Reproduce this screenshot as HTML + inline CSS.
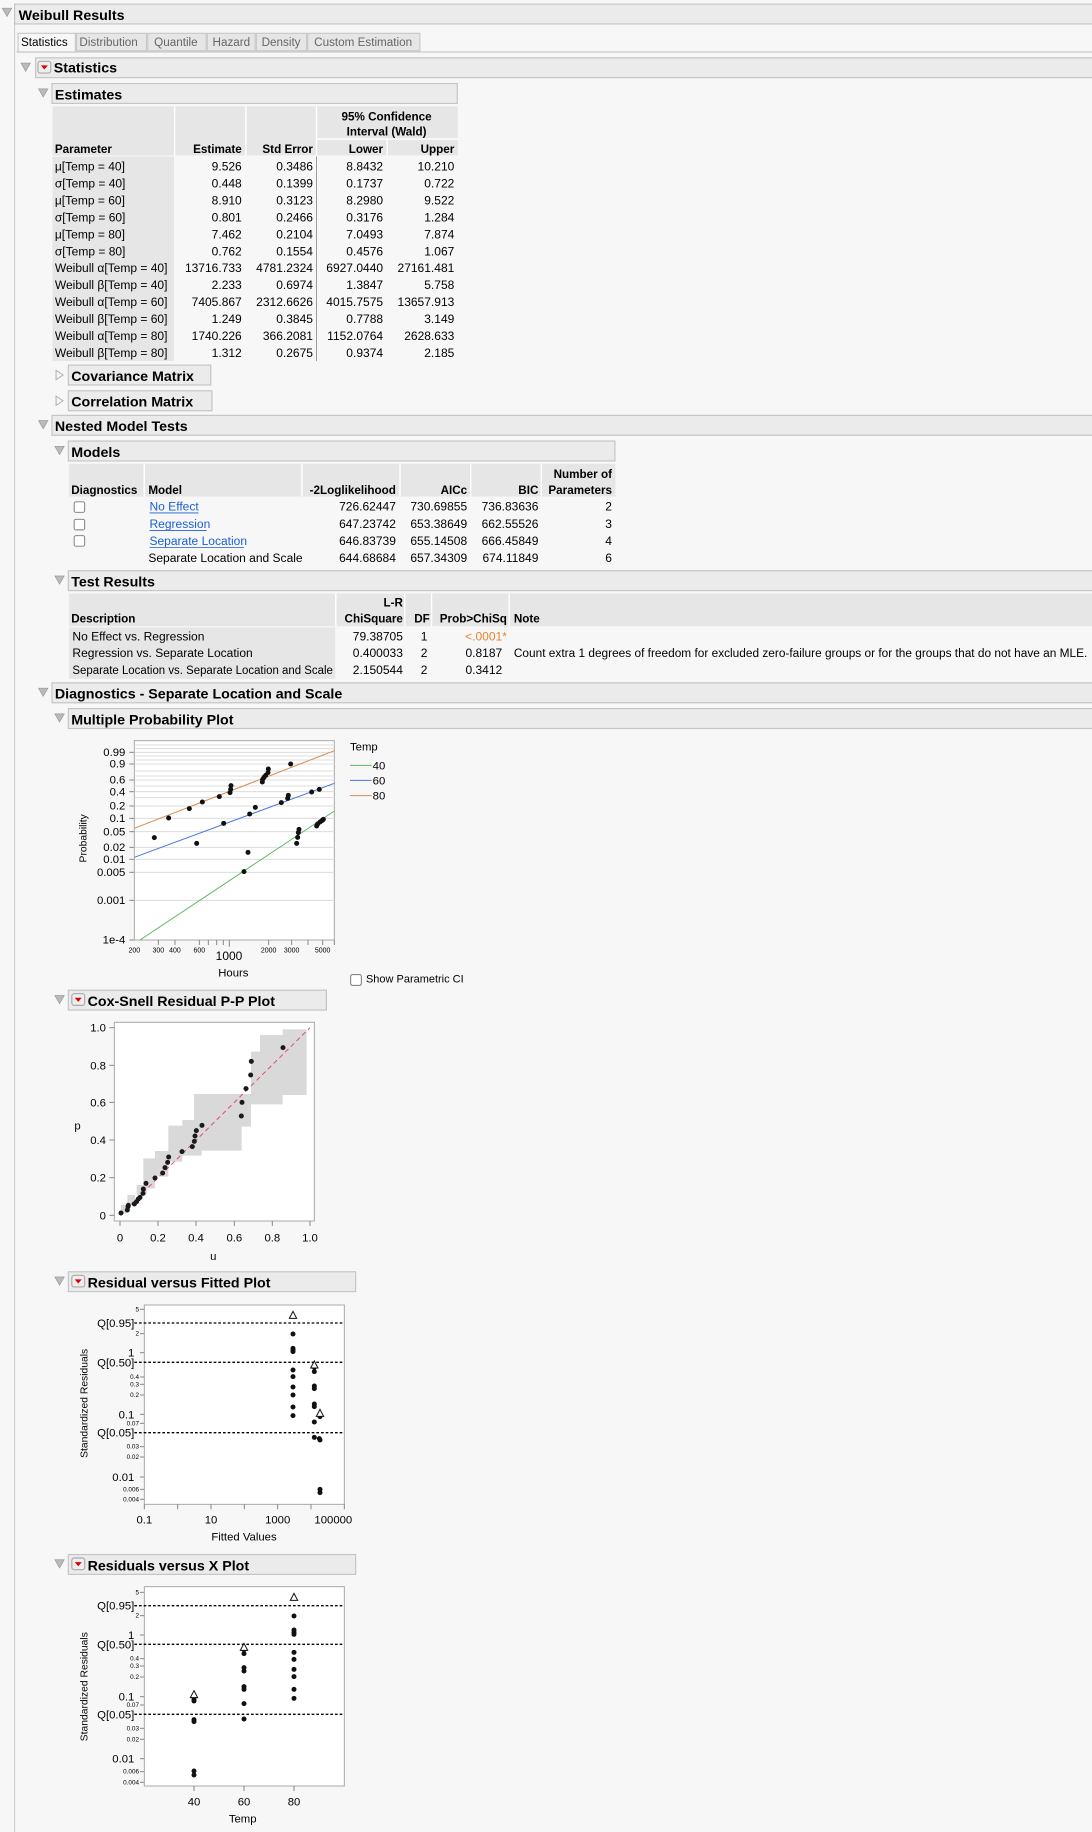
<!DOCTYPE html>
<html><head><meta charset="utf-8"><style>html,body{margin:0;padding:0;background:#f7f7f7}svg{display:block}text{font-family:"Liberation Sans",sans-serif}</style></head><body>
<svg width="1092" height="1832" viewBox="0 0 1092 1832" xmlns="http://www.w3.org/2000/svg">
<rect width="1092" height="1832" fill="#f7f7f7"/>
<g transform="scale(1.16791,1.16837)" font-size="10.5" fill="#000">
<line x1="12.5" y1="21" x2="12.5" y2="1568" stroke="#d0d0d0"/>
<rect x="12.5" y="3.5" width="930" height="17" fill="#ebebeb" stroke="#c4c4c4"/>
<path d="M2 7 L10 7 L6 14 Z" fill="#bbb" stroke="#999" stroke-width=".6"/>
<text x="16" y="17" font-weight="bold" font-size="12.2">Weibull Results</text>
<line x1="14" y1="44.5" x2="935" y2="44.5" stroke="#c8c8c8"/>
<rect x="15.5" y="28.5" width="49" height="16" fill="#f7f7f7" stroke="#c8c8c8"/>
<rect x="65.5" y="28.5" width="60" height="15" fill="#e6e6e6" stroke="#c8c8c8"/>
<rect x="126.5" y="28.5" width="50" height="15" fill="#e6e6e6" stroke="#c8c8c8"/>
<rect x="177.5" y="28.5" width="41" height="15" fill="#e6e6e6" stroke="#c8c8c8"/>
<rect x="219.5" y="28.5" width="43" height="15" fill="#e6e6e6" stroke="#c8c8c8"/>
<rect x="263.5" y="28.5" width="96" height="15" fill="#e6e6e6" stroke="#c8c8c8"/>
<g font-size="10" fill="#666"><text x="18" y="39.5" fill="#000">Statistics</text><text x="68" y="39.5">Distribution</text><text x="132" y="39.5">Quantile</text><text x="182" y="39.5">Hazard</text><text x="224" y="39.5">Density</text><text x="269" y="39.5">Custom Estimation</text></g>
<rect x="30.5" y="49.5" width="910" height="17" fill="#ebebeb" stroke="#c4c4c4"/>
<path d="M18 54 L26 54 L22 61 Z" fill="#bbb" stroke="#999" stroke-width=".6"/>
<rect x="32.5" y="52.5" width="11" height="10" rx="2" fill="#eee" stroke="#aaa"/><path d="M35 56 L41 56 L38 59.5 Z" fill="#d00"/>
<text x="46" y="62" font-weight="bold" font-size="12.2">Statistics</text>
<rect x="44.5" y="71.5" width="347" height="17" fill="#ebebeb" stroke="#c4c4c4"/>
<path d="M33 76 L41 76 L37 83 Z" fill="#bbb" stroke="#999" stroke-width=".6"/>
<text x="47" y="85" font-weight="bold" font-size="12.2">Estimates</text>
<rect x="45" y="91" width="347" height="42" fill="#e6e6e6"/>
<rect x="45" y="134" width="104" height="175" fill="#e6e6e6"/>
<g stroke="#fff" stroke-width="1.2"><line x1="149.5" y1="91" x2="149.5" y2="133"/><line x1="210.5" y1="91" x2="210.5" y2="133"/><line x1="271" y1="91" x2="271" y2="133"/><line x1="331.5" y1="119" x2="331.5" y2="133"/><line x1="271" y1="119" x2="392" y2="119"/></g>
<line x1="271" y1="134" x2="271" y2="309" stroke="#888" stroke-width=".7"/>
<g font-weight="bold" font-size="10"><text x="331" y="103" text-anchor="middle">95% Confidence</text><text x="331" y="116" text-anchor="middle">Interval (Wald)</text><text x="47" y="131">Parameter</text><text x="207" y="131" text-anchor="end">Estimate</text><text x="268" y="131" text-anchor="end">Std Error</text><text x="328" y="131" text-anchor="end">Lower</text><text x="389" y="131" text-anchor="end">Upper</text></g>
<g font-size="10.3">
<text x="47" y="146">μ[Temp = 40]</text><text x="47" y="160.5">σ[Temp = 40]</text><text x="47" y="175">μ[Temp = 60]</text><text x="47" y="189.5">σ[Temp = 60]</text><text x="47" y="204">μ[Temp = 80]</text><text x="47" y="218.5">σ[Temp = 80]</text><text x="47" y="233">Weibull α[Temp = 40]</text><text x="47" y="247.5">Weibull β[Temp = 40]</text><text x="47" y="262">Weibull α[Temp = 60]</text><text x="47" y="276.5">Weibull β[Temp = 60]</text><text x="47" y="291">Weibull α[Temp = 80]</text><text x="47" y="305.5">Weibull β[Temp = 80]</text>
<g text-anchor="end">
<text x="207" y="146">9.526</text><text x="207" y="160.5">0.448</text><text x="207" y="175">8.910</text><text x="207" y="189.5">0.801</text><text x="207" y="204">7.462</text><text x="207" y="218.5">0.762</text><text x="207" y="233">13716.733</text><text x="207" y="247.5">2.233</text><text x="207" y="262">7405.867</text><text x="207" y="276.5">1.249</text><text x="207" y="291">1740.226</text><text x="207" y="305.5">1.312</text>
<text x="268" y="146">0.3486</text><text x="268" y="160.5">0.1399</text><text x="268" y="175">0.3123</text><text x="268" y="189.5">0.2466</text><text x="268" y="204">0.2104</text><text x="268" y="218.5">0.1554</text><text x="268" y="233">4781.2324</text><text x="268" y="247.5">0.6974</text><text x="268" y="262">2312.6626</text><text x="268" y="276.5">0.3845</text><text x="268" y="291">366.2081</text><text x="268" y="305.5">0.2675</text>
<text x="328" y="146">8.8432</text><text x="328" y="160.5">0.1737</text><text x="328" y="175">8.2980</text><text x="328" y="189.5">0.3176</text><text x="328" y="204">7.0493</text><text x="328" y="218.5">0.4576</text><text x="328" y="233">6927.0440</text><text x="328" y="247.5">1.3847</text><text x="328" y="262">4015.7575</text><text x="328" y="276.5">0.7788</text><text x="328" y="291">1152.0764</text><text x="328" y="305.5">0.9374</text>
<text x="389" y="146">10.210</text><text x="389" y="160.5">0.722</text><text x="389" y="175">9.522</text><text x="389" y="189.5">1.284</text><text x="389" y="204">7.874</text><text x="389" y="218.5">1.067</text><text x="389" y="233">27161.481</text><text x="389" y="247.5">5.758</text><text x="389" y="262">13657.913</text><text x="389" y="276.5">3.149</text><text x="389" y="291">2628.633</text><text x="389" y="305.5">2.185</text>
</g></g>
<rect x="58.5" y="312.5" width="122" height="17" fill="#ebebeb" stroke="#c4c4c4"/>
<path d="M48 317 L48 325 L54 321 Z" fill="none" stroke="#aaa" stroke-width=".8"/>
<text x="61" y="326" font-weight="bold" font-size="12.2">Covariance Matrix</text>
<rect x="58.5" y="334.5" width="123" height="17" fill="#ebebeb" stroke="#c4c4c4"/>
<path d="M48 339 L48 347 L54 343 Z" fill="none" stroke="#aaa" stroke-width=".8"/>
<text x="61" y="348" font-weight="bold" font-size="12.2">Correlation Matrix</text>
<rect x="44.5" y="355.5" width="900" height="17" fill="#ebebeb" stroke="#c4c4c4"/>
<path d="M33 360 L41 360 L37 367 Z" fill="#bbb" stroke="#999" stroke-width=".6"/>
<text x="47" y="369" font-weight="bold" font-size="12.2">Nested Model Tests</text>
<rect x="58.5" y="377.5" width="468" height="17" fill="#ebebeb" stroke="#c4c4c4"/>
<path d="M47 382 L55 382 L51 389 Z" fill="#bbb" stroke="#999" stroke-width=".6"/>
<text x="61" y="391" font-weight="bold" font-size="12.2">Models</text>
<rect x="59" y="397" width="468" height="28" fill="#e6e6e6"/>
<g stroke="#fff" stroke-width="1.2"><line x1="123.5" y1="397" x2="123.5" y2="425"/><line x1="258.5" y1="397" x2="258.5" y2="425"/><line x1="342.5" y1="397" x2="342.5" y2="425"/><line x1="403" y1="397" x2="403" y2="425"/><line x1="463.5" y1="397" x2="463.5" y2="425"/></g>
<g font-weight="bold" font-size="10"><text x="61" y="423">Diagnostics</text><text x="127" y="423">Model</text><text x="339" y="423" text-anchor="end">-2Loglikelihood</text><text x="400" y="423" text-anchor="end">AICc</text><text x="461" y="423" text-anchor="end">BIC</text><text x="524" y="409" text-anchor="end">Number of</text><text x="524" y="423" text-anchor="end">Parameters</text></g>
<g fill="#fff" stroke="#777" stroke-width=".8"><rect x="63.5" y="429.5" width="9" height="9" rx="1.5"/><rect x="63.5" y="444.5" width="9" height="9" rx="1.5"/><rect x="63.5" y="458.5" width="9" height="9" rx="1.5"/></g>
<g font-size="10.3"><g fill="#1a5fd6"><text x="128" y="437">No Effect</text><text x="128" y="452">Regression</text><text x="128" y="466.5">Separate Location</text></g>
<line x1="128" y1="439" x2="170" y2="439" stroke="#1a5fd6" stroke-width=".7"/><line x1="128" y1="454" x2="177" y2="454" stroke="#1a5fd6" stroke-width=".7"/><line x1="128" y1="468.5" x2="209" y2="468.5" stroke="#1a5fd6" stroke-width=".7"/>
<text x="127" y="481">Separate Location and Scale</text>
<g text-anchor="end"><text x="339" y="437">726.62447</text><text x="339" y="452">647.23742</text><text x="339" y="466.5">646.83739</text><text x="339" y="481">644.68684</text>
<text x="400" y="437">730.69855</text><text x="400" y="452">653.38649</text><text x="400" y="466.5">655.14508</text><text x="400" y="481">657.34309</text>
<text x="461" y="437">736.83636</text><text x="461" y="452">662.55526</text><text x="461" y="466.5">666.45849</text><text x="461" y="481">674.11849</text>
<text x="524" y="437">2</text><text x="524" y="452">3</text><text x="524" y="466.5">4</text><text x="524" y="481">6</text></g></g>
<rect x="58.5" y="488.5" width="890" height="17" fill="#ebebeb" stroke="#c4c4c4"/>
<path d="M47 493 L55 493 L51 500 Z" fill="#bbb" stroke="#999" stroke-width=".6"/>
<text x="61" y="502" font-weight="bold" font-size="12.2">Test Results</text>
<rect x="59" y="508" width="876" height="28" fill="#e6e6e6"/>
<rect x="59" y="537" width="228" height="44" fill="#e6e6e6"/>
<g stroke="#fff" stroke-width="1.2"><line x1="287.5" y1="508" x2="287.5" y2="536"/><line x1="346.5" y1="508" x2="346.5" y2="536"/><line x1="369.5" y1="508" x2="369.5" y2="536"/><line x1="436" y1="508" x2="436" y2="536"/></g>
<g font-weight="bold" font-size="10"><text x="61" y="533">Description</text><text x="345" y="519" text-anchor="end">L-R</text><text x="345" y="533" text-anchor="end">ChiSquare</text><text x="368" y="533" text-anchor="end">DF</text><text x="434" y="533" text-anchor="end">Prob&gt;ChiSq</text><text x="440" y="533">Note</text></g>
<g font-size="10.3"><text x="62" y="548">No Effect vs. Regression</text><text x="62" y="562.5">Regression vs. Separate Location</text><text x="62" y="577" textLength="223" lengthAdjust="spacingAndGlyphs">Separate Location vs. Separate Location and Scale</text>
<g text-anchor="end"><text x="345" y="548">79.38705</text><text x="345" y="562.5">0.400033</text><text x="345" y="577">2.150544</text><text x="366" y="548">1</text><text x="366" y="562.5">2</text><text x="366" y="577">2</text><text x="434" y="548" fill="#e8822e">&lt;.0001*</text><text x="430" y="562.5">0.8187</text><text x="430" y="577">0.3412</text></g>
<text x="440" y="562.5" textLength="491" lengthAdjust="spacingAndGlyphs">Count extra 1 degrees of freedom for excluded zero-failure groups or for the groups that do not have an MLE.</text></g>
<rect x="44.5" y="584.5" width="900" height="17" fill="#ebebeb" stroke="#c4c4c4"/>
<path d="M33 589 L41 589 L37 596 Z" fill="#bbb" stroke="#999" stroke-width=".6"/>
<text x="47" y="598" font-weight="bold" font-size="12.2">Diagnostics - Separate Location and Scale</text>
<rect x="58.5" y="606.5" width="890" height="17" fill="#ebebeb" stroke="#c4c4c4"/>
<path d="M47 611 L55 611 L51 618 Z" fill="#bbb" stroke="#999" stroke-width=".6"/>
<text x="61" y="620" font-weight="bold" font-size="12.2">Multiple Probability Plot</text>
<rect x="58.5" y="847.5" width="221" height="17" fill="#ebebeb" stroke="#c4c4c4"/>
<path d="M47 852 L55 852 L51 859 Z" fill="#bbb" stroke="#999" stroke-width=".6"/>
<rect x="61.5" y="850.5" width="11" height="10" rx="2" fill="#eee" stroke="#aaa"/><path d="M64 854 L70 854 L67 857.5 Z" fill="#d00"/>
<text x="75" y="861" font-weight="bold" font-size="12.2">Cox-Snell Residual P-P Plot</text>
<rect x="58.5" y="1088.5" width="246" height="17" fill="#ebebeb" stroke="#c4c4c4"/>
<path d="M47 1093 L55 1093 L51 1100 Z" fill="#bbb" stroke="#999" stroke-width=".6"/>
<rect x="61.5" y="1091.5" width="11" height="10" rx="2" fill="#eee" stroke="#aaa"/><path d="M64 1095 L70 1095 L67 1098.5 Z" fill="#d00"/>
<text x="75" y="1102" font-weight="bold" font-size="12.2">Residual versus Fitted Plot</text>
<rect x="58.5" y="1330.5" width="246" height="17" fill="#ebebeb" stroke="#c4c4c4"/>
<path d="M47 1335 L55 1335 L51 1342 Z" fill="#bbb" stroke="#999" stroke-width=".6"/>
<rect x="61.5" y="1333.5" width="11" height="10" rx="2" fill="#eee" stroke="#aaa"/><path d="M64 1337 L70 1337 L67 1340.5 Z" fill="#d00"/>
<text x="75" y="1344" font-weight="bold" font-size="12.2">Residuals versus X Plot</text>
</g>

<g transform="translate(40,700) scale(0.33333)" font-size="34">
<rect x="283" y="122" width="600" height="598" fill="#fff" stroke="#a8a8a8" stroke-width="3"/>
<g stroke="#dcdcdc" stroke-width="3"><line x1="283" x2="883" y1="135" y2="135"/><line x1="283" x2="883" y1="146" y2="146"/><line x1="283" x2="883" y1="157" y2="157"/><line x1="283" x2="883" y1="168" y2="168"/><line x1="283" x2="883" y1="180" y2="180"/><line x1="283" x2="883" y1="192" y2="192"/><line x1="283" x2="883" y1="213" y2="213"/><line x1="283" x2="883" y1="228" y2="228"/><line x1="283" x2="883" y1="240" y2="240"/><line x1="283" x2="883" y1="258" y2="258"/><line x1="283" x2="883" y1="275" y2="275"/><line x1="283" x2="883" y1="293" y2="293"/><line x1="283" x2="883" y1="318" y2="318"/><line x1="283" x2="883" y1="355" y2="355"/><line x1="283" x2="883" y1="395" y2="395"/><line x1="283" x2="883" y1="442" y2="442"/><line x1="283" x2="883" y1="478" y2="478"/><line x1="283" x2="883" y1="517" y2="517"/><line x1="283" x2="883" y1="601" y2="601"/></g>
<g stroke="#888" stroke-width="3"><line x1="268" x2="283" y1="157" y2="157"/><line x1="268" x2="283" y1="192" y2="192"/><line x1="268" x2="283" y1="240" y2="240"/><line x1="268" x2="283" y1="275" y2="275"/><line x1="268" x2="283" y1="318" y2="318"/><line x1="268" x2="283" y1="355" y2="355"/><line x1="268" x2="283" y1="395" y2="395"/><line x1="268" x2="283" y1="442" y2="442"/><line x1="268" x2="283" y1="478" y2="478"/><line x1="268" x2="283" y1="517" y2="517"/><line x1="268" x2="283" y1="601" y2="601"/><line x1="268" x2="283" y1="720" y2="720"/>
<line x1="355" x2="355" y1="720" y2="735"/><line x1="405" x2="405" y1="720" y2="735"/><line x1="478" x2="478" y1="720" y2="735"/><line x1="505" x2="505" y1="720" y2="735"/><line x1="530" x2="530" y1="720" y2="735"/><line x1="550" x2="550" y1="720" y2="735"/><line x1="568" x2="568" y1="720" y2="740"/><line x1="686" x2="686" y1="720" y2="735"/><line x1="755" x2="755" y1="720" y2="735"/><line x1="804" x2="804" y1="720" y2="735"/><line x1="848" x2="848" y1="720" y2="735"/><line x1="883" x2="883" y1="720" y2="735"/></g>
<g text-anchor="end"><text x="256" y="168">0.99</text><text x="256" y="203">0.9</text><text x="256" y="251">0.6</text><text x="256" y="286">0.4</text><text x="256" y="329">0.2</text><text x="256" y="366">0.1</text><text x="256" y="406">0.05</text><text x="256" y="453">0.02</text><text x="256" y="489">0.01</text><text x="256" y="528">0.005</text><text x="256" y="612">0.001</text><text x="256" y="731">1e-4</text></g>
<g font-size="21" text-anchor="middle"><text x="283" y="758">200</text><text x="355" y="758">300</text><text x="405" y="758">400</text><text x="478" y="758">600</text><text x="686" y="758">2000</text><text x="755" y="758">3000</text><text x="848" y="758">5000</text></g>
<text x="567" y="780" text-anchor="middle" font-size="36">1000</text>
<text x="580" y="830" text-anchor="middle">Hours</text>
<text transform="translate(140,415) rotate(-90)" text-anchor="middle" font-size="31">Probability</text>
<line x1="283" y1="385" x2="883" y2="152" stroke="#d98a4a" stroke-width="3"/>
<line x1="283" y1="472" x2="883" y2="250" stroke="#4a74dd" stroke-width="3"/>
<line x1="300" y1="720" x2="883" y2="333" stroke="#5cb85c" stroke-width="3"/>
<g fill="#111">
<circle cx="343" cy="413" r="7.5"/><circle cx="386" cy="354" r="7.5"/><circle cx="448" cy="326" r="7.5"/><circle cx="487" cy="306" r="7.5"/><circle cx="538" cy="290" r="7.5"/><circle cx="570" cy="278" r="7.5"/><circle cx="572" cy="268" r="7.5"/><circle cx="573" cy="257" r="7.5"/><circle cx="667" cy="246" r="7.5"/><circle cx="668" cy="238" r="7.5"/><circle cx="672" cy="232" r="7.5"/><circle cx="677" cy="226" r="7.5"/><circle cx="684" cy="218" r="7.5"/><circle cx="685" cy="207" r="7.5"/><circle cx="752" cy="192" r="7.5"/>
<circle cx="470" cy="430" r="7.5"/><circle cx="551" cy="370" r="7.5"/><circle cx="629" cy="342" r="7.5"/><circle cx="646" cy="322" r="7.5"/><circle cx="724" cy="308" r="7.5"/><circle cx="743" cy="295" r="7.5"/><circle cx="745" cy="286" r="7.5"/><circle cx="815" cy="276" r="7.5"/><circle cx="838" cy="268" r="7.5"/>
<circle cx="612" cy="515" r="7.5"/><circle cx="624" cy="457" r="7.5"/><circle cx="770" cy="430" r="7.5"/><circle cx="773" cy="412" r="7.5"/><circle cx="775" cy="398" r="7.5"/><circle cx="777" cy="388" r="7.5"/><circle cx="830" cy="378" r="7.5"/><circle cx="833" cy="372" r="7.5"/><circle cx="840" cy="366" r="7.5"/><circle cx="846" cy="362" r="7.5"/><circle cx="850" cy="358" r="7.5"/></g>
<text x="930" y="152">Temp</text>
<line x1="930" y1="196" x2="995" y2="196" stroke="#5cb85c" stroke-width="3"/><text x="998" y="208">40</text>
<line x1="930" y1="241" x2="995" y2="241" stroke="#4a74dd" stroke-width="3"/><text x="998" y="253">60</text>
<line x1="930" y1="287" x2="995" y2="287" stroke="#d98a4a" stroke-width="3"/><text x="998" y="299">80</text>
<rect x="932" y="824" width="32" height="32" rx="5" fill="#fff" stroke="#777" stroke-width="3"/>
<text x="978" y="848" font-size="33">Show Parametric CI</text>
</g>

<g transform="translate(40,980) scale(0.33333)" font-size="34">
<rect x="223" y="127" width="600" height="596" fill="#fff" stroke="#a8a8a8" stroke-width="3"/>
<path d="M243,675 L262,675 L262,645 L290,645 L290,615 L310,615 L310,535 L345,535 L345,513 L385,513 L385,437 L427,437 L427,420 L462,420 L462,342 L633,342 L633,215 L660,215 L660,165 L728,165 L728,148 L800,148 L800,345 L728,345 L728,373 L633,373 L633,440 L605,440 L605,512 L485,512 L485,527 L427,527 L427,545 L385,545 L385,590 L345,590 L345,625 L320,625 L320,645 L285,645 L285,675 L262,675 L262,700 L243,700 Z" fill="#d9d9d9"/>
<line x1="240" y1="706" x2="810" y2="143" stroke="#e05060" stroke-width="3" stroke-dasharray="14,10"/>
<g fill="#1a1a1a"><circle cx="243" cy="699" r="7.5"/><circle cx="262" cy="690" r="7.5"/><circle cx="264" cy="680" r="7.5"/><circle cx="265" cy="676" r="7.5"/><circle cx="283" cy="672" r="7.5"/><circle cx="290" cy="665" r="7.5"/><circle cx="295" cy="657" r="7.5"/><circle cx="300" cy="652" r="7.5"/><circle cx="309" cy="640" r="7.5"/><circle cx="310" cy="627" r="7.5"/><circle cx="318" cy="610" r="7.5"/><circle cx="345" cy="594" r="7.5"/><circle cx="368" cy="579" r="7.5"/><circle cx="375" cy="563" r="7.5"/><circle cx="383" cy="547" r="7.5"/><circle cx="386" cy="531" r="7.5"/><circle cx="426" cy="515" r="7.5"/><circle cx="457" cy="500" r="7.5"/><circle cx="463" cy="484" r="7.5"/><circle cx="465" cy="468" r="7.5"/><circle cx="469" cy="452" r="7.5"/><circle cx="486" cy="436" r="7.5"/><circle cx="604" cy="408" r="7.5"/><circle cx="606" cy="367" r="7.5"/><circle cx="618" cy="326" r="7.5"/><circle cx="632" cy="285" r="7.5"/><circle cx="634" cy="244" r="7.5"/><circle cx="729" cy="203" r="7.5"/></g>
<g text-anchor="end"><text x="198" y="155">1.0</text><text x="198" y="268">0.8</text><text x="198" y="379">0.6</text><text x="198" y="492">0.4</text><text x="198" y="605">0.2</text><text x="198" y="718">0</text></g>
<g stroke="#888" stroke-width="3"><line x1="208" x2="223" y1="143" y2="143"/><line x1="208" x2="223" y1="256" y2="256"/><line x1="208" x2="223" y1="367" y2="367"/><line x1="208" x2="223" y1="480" y2="480"/><line x1="208" x2="223" y1="593" y2="593"/><line x1="208" x2="223" y1="706" y2="706"/>
<line x1="240" x2="240" y1="723" y2="738"/><line x1="354" x2="354" y1="723" y2="738"/><line x1="468" x2="468" y1="723" y2="738"/><line x1="583" x2="583" y1="723" y2="738"/><line x1="697" x2="697" y1="723" y2="738"/><line x1="810" x2="810" y1="723" y2="738"/></g>
<g text-anchor="middle"><text x="240" y="785">0</text><text x="354" y="785">0.2</text><text x="468" y="785">0.4</text><text x="583" y="785">0.6</text><text x="697" y="785">0.8</text><text x="810" y="785">1.0</text><text x="520" y="840">u</text></g>
<text x="103" y="448">p</text>
</g>

<g transform="translate(40,1260) scale(0.33333)" font-size="34">
<rect x="313" y="135" width="600" height="598" fill="#fff" stroke="#a8a8a8" stroke-width="3"/>
<g stroke="#000" stroke-width="4" stroke-dasharray="8,6"><line x1="283" x2="913" y1="189" y2="189"/><line x1="283" x2="913" y1="307" y2="307"/><line x1="283" x2="913" y1="518" y2="518"/></g>
<g text-anchor="end"><text x="283" y="201">Q[0.95]</text><text x="283" y="319">Q[0.50]</text><text x="283" y="530">Q[0.05]</text><text x="283" y="290">1</text><text x="283" y="475">0.1</text><text x="283" y="663">0.01</text>
<g font-size="19"><text x="297" y="154">5</text><text x="297" y="227">2</text><text x="297" y="357">0.4</text><text x="297" y="379">0.3</text><text x="297" y="411">0.2</text><text x="297" y="496">0.07</text><text x="297" y="566">0.03</text><text x="297" y="597">0.02</text><text x="297" y="694">0.006</text><text x="297" y="724">0.004</text></g></g>
<g stroke="#888" stroke-width="3"><line x1="300" x2="313" y1="148" y2="148"/><line x1="300" x2="313" y1="221" y2="221"/><line x1="300" x2="313" y1="278" y2="278"/><line x1="300" x2="313" y1="351" y2="351"/><line x1="300" x2="313" y1="373" y2="373"/><line x1="300" x2="313" y1="405" y2="405"/><line x1="300" x2="313" y1="463" y2="463"/><line x1="300" x2="313" y1="490" y2="490"/><line x1="300" x2="313" y1="560" y2="560"/><line x1="300" x2="313" y1="591" y2="591"/><line x1="300" x2="313" y1="651" y2="651"/><line x1="300" x2="313" y1="688" y2="688"/><line x1="300" x2="313" y1="718" y2="718"/>
<line x1="313" x2="313" y1="733" y2="748"/><line x1="413" x2="413" y1="733" y2="748"/><line x1="513" x2="513" y1="733" y2="748"/><line x1="613" x2="613" y1="733" y2="748"/><line x1="713" x2="713" y1="733" y2="748"/><line x1="813" x2="813" y1="733" y2="748"/><line x1="913" x2="913" y1="733" y2="748"/></g>
<g text-anchor="middle"><text x="313" y="790">0.1</text><text x="513" y="790">10</text><text x="713" y="790">1000</text><text x="880" y="790">100000</text><text x="612" y="842">Fitted Values</text></g>
<text transform="translate(142,430) rotate(-90)" text-anchor="middle" font-size="31">Standardized Residuals</text>
<g fill="#111"><circle cx="759" cy="222" r="7.5"/><circle cx="759" cy="265" r="7.5"/><circle cx="759" cy="270" r="7.5"/><circle cx="759" cy="275" r="7.5"/><circle cx="759" cy="330" r="7.5"/><circle cx="759" cy="350" r="7.5"/><circle cx="759" cy="381" r="7.5"/><circle cx="759" cy="405" r="7.5"/><circle cx="759" cy="441" r="7.5"/><circle cx="759" cy="467" r="7.5"/>
<circle cx="823" cy="322" r="7.5"/><circle cx="823" cy="335" r="7.5"/><circle cx="823" cy="378" r="7.5"/><circle cx="823" cy="386" r="7.5"/><circle cx="823" cy="432" r="7.5"/><circle cx="823" cy="440" r="7.5"/><circle cx="823" cy="486" r="7.5"/><circle cx="823" cy="532" r="7.5"/>
<circle cx="840" cy="465" r="7.5"/><circle cx="840" cy="470" r="7.5"/><circle cx="838" cy="536" r="7.5"/><circle cx="840" cy="540" r="7.5"/><circle cx="840" cy="688" r="7.5"/><circle cx="840" cy="698" r="7.5"/></g>
<g fill="#fff" stroke="#111" stroke-width="3"><path d="M759,154 L770,175 L748,175 Z"/><path d="M823,303 L834,324 L812,324 Z"/><path d="M840,448 L851,469 L829,469 Z"/></g>
</g>

<g transform="translate(40,1545) scale(0.33333)" font-size="34">
<rect x="313" y="125" width="600" height="598" fill="#fff" stroke="#a8a8a8" stroke-width="3"/>
<g stroke="#000" stroke-width="4" stroke-dasharray="8,6"><line x1="283" x2="913" y1="182" y2="182"/><line x1="283" x2="913" y1="298" y2="298"/><line x1="283" x2="913" y1="508" y2="508"/></g>
<g text-anchor="end"><text x="283" y="194">Q[0.95]</text><text x="283" y="310">Q[0.50]</text><text x="283" y="520">Q[0.05]</text><text x="283" y="282">1</text><text x="283" y="467">0.1</text><text x="283" y="653">0.01</text>
<g font-size="19"><text x="297" y="148">5</text><text x="297" y="218">2</text><text x="297" y="347">0.4</text><text x="297" y="369">0.3</text><text x="297" y="402">0.2</text><text x="297" y="486">0.07</text><text x="297" y="556">0.03</text><text x="297" y="589">0.02</text><text x="297" y="686">0.006</text><text x="297" y="718">0.004</text></g></g>
<g stroke="#888" stroke-width="3"><line x1="300" x2="313" y1="142" y2="142"/><line x1="300" x2="313" y1="212" y2="212"/><line x1="300" x2="313" y1="270" y2="270"/><line x1="300" x2="313" y1="341" y2="341"/><line x1="300" x2="313" y1="363" y2="363"/><line x1="300" x2="313" y1="396" y2="396"/><line x1="300" x2="313" y1="455" y2="455"/><line x1="300" x2="313" y1="480" y2="480"/><line x1="300" x2="313" y1="550" y2="550"/><line x1="300" x2="313" y1="583" y2="583"/><line x1="300" x2="313" y1="641" y2="641"/><line x1="300" x2="313" y1="680" y2="680"/><line x1="300" x2="313" y1="712" y2="712"/>
<line x1="462" x2="462" y1="723" y2="738"/><line x1="612" x2="612" y1="723" y2="738"/><line x1="762" x2="762" y1="723" y2="738"/></g>
<g text-anchor="middle"><text x="462" y="782">40</text><text x="612" y="782">60</text><text x="762" y="782">80</text><text x="608" y="832">Temp</text></g>
<text transform="translate(142,425) rotate(-90)" text-anchor="middle" font-size="31">Standardized Residuals</text>
<g fill="#111"><circle cx="462" cy="455" r="7.5"/><circle cx="462" cy="462" r="7.5"/><circle cx="462" cy="468" r="7.5"/><circle cx="462" cy="524" r="7.5"/><circle cx="462" cy="530" r="7.5"/><circle cx="462" cy="678" r="7.5"/><circle cx="462" cy="690" r="7.5"/>
<circle cx="612" cy="314" r="7.5"/><circle cx="612" cy="326" r="7.5"/><circle cx="612" cy="368" r="7.5"/><circle cx="612" cy="378" r="7.5"/><circle cx="612" cy="425" r="7.5"/><circle cx="612" cy="433" r="7.5"/><circle cx="612" cy="476" r="7.5"/><circle cx="612" cy="522" r="7.5"/>
<circle cx="762" cy="213" r="7.5"/><circle cx="762" cy="255" r="7.5"/><circle cx="762" cy="262" r="7.5"/><circle cx="762" cy="268" r="7.5"/><circle cx="762" cy="322" r="7.5"/><circle cx="762" cy="343" r="7.5"/><circle cx="762" cy="373" r="7.5"/><circle cx="762" cy="395" r="7.5"/><circle cx="762" cy="433" r="7.5"/><circle cx="762" cy="460" r="7.5"/></g>
<g fill="#fff" stroke="#111" stroke-width="3"><path d="M762,145 L773,166 L751,166 Z"/><path d="M612,295 L623,316 L601,316 Z"/><path d="M462,437 L473,458 L451,458 Z"/></g>
</g>
</svg>
</body></html>
